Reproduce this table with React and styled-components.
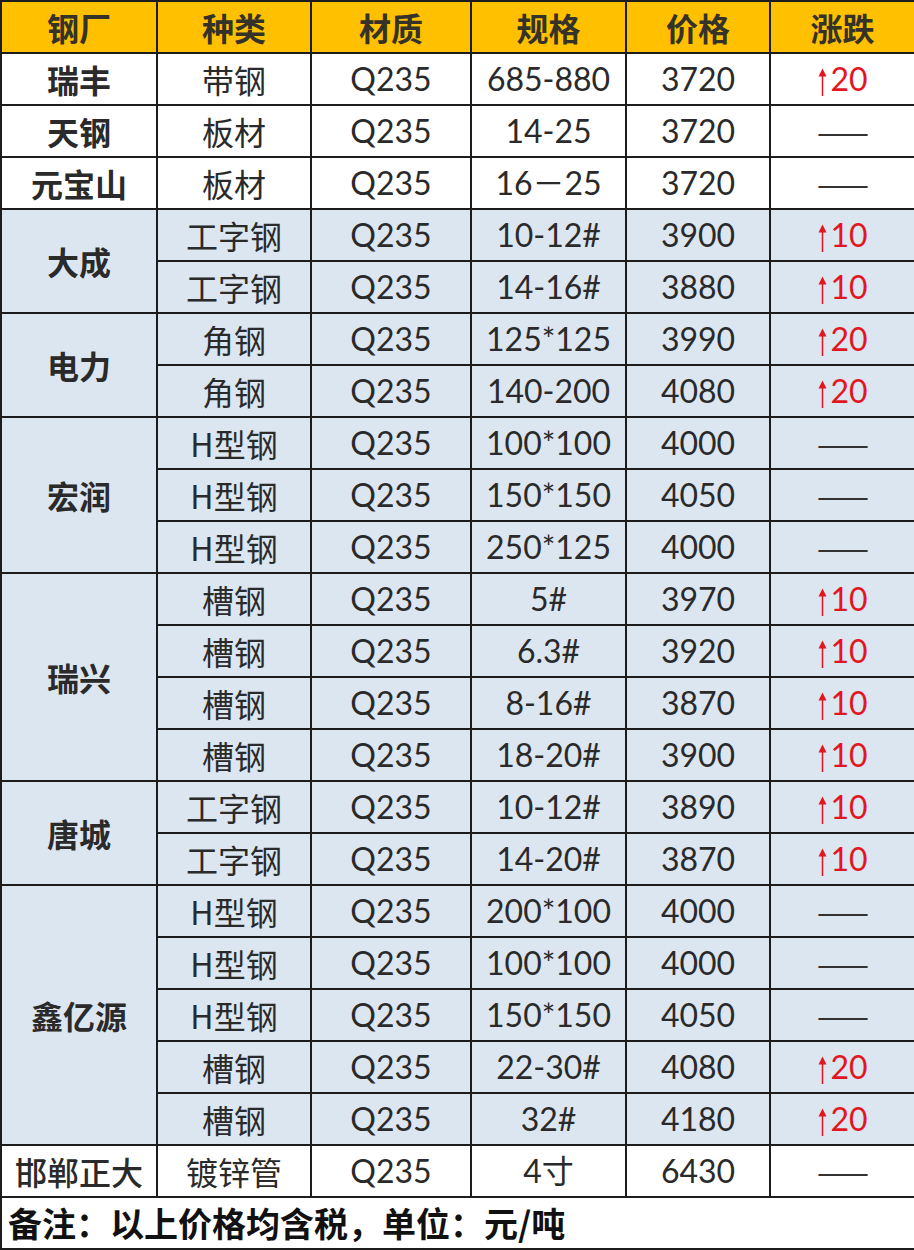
import React from "react";
import styled, { createGlobalStyle } from "styled-components";

const Global = createGlobalStyle`
  html, body { margin: 0; padding: 0; background: #fff; }
  body { font-family: Lato, "Noto Sans CJK SC", sans-serif; }
`;

const Table = styled.table`
  width: 914px;
  table-layout: fixed;
  border-collapse: collapse;
  color: #2a2a2a;
`;

const Row = styled.tr`
  height: 52px;
  background: ${(p) => (p.$blue ? "#dce6f1" : "#ffffff")};
`;

const HeadRow = styled.tr`
  height: 52px;
  background: #ffc000;
`;

const HeadCell = styled.th`
  border: 2px solid #1c1c1c;
  padding: 0;
  text-align: center;
  vertical-align: middle;
  font-family: "Noto Sans CJK SC", sans-serif;
  font-weight: 700;
  font-size: 32px;
  color: #35322a;
  line-height: 1;
`;

const Cell = styled.td`
  border: 2px solid #1c1c1c;
  padding: 0;
  text-align: center;
  vertical-align: middle;
  line-height: 1;
  white-space: nowrap;
  font-family: ${(p) =>
    p.$cjk ? `"Noto Sans CJK SC", sans-serif` : `Lato, "Noto Sans CJK SC", sans-serif`};
  font-size: ${(p) => (p.$cjk ? "32px" : "32px")};
  font-weight: ${(p) => p.$weight || 400};
`;

const ChangeCell = styled(Cell)`
  color: #e3161f;
`;

const Up = styled.span`
  font-family: Lato, sans-serif;
  font-size: 32px;
  font-weight: 400;
`;

const ArrowSvg = styled.svg`
  display: inline-block;
  width: 11px;
  height: 29px;
  vertical-align: -5px;
  margin-right: 2px;
`;

const Dash = styled.span`
  font-family: "Noto Sans CJK SC", sans-serif;
  font-size: 31px;
  color: #333;
  letter-spacing: -1px;
`;

const FootCell = styled.td`
  border: 2px solid #1c1c1c;
  padding: 0 0 0 6px;
  text-align: left;
  vertical-align: middle;
  font-family: "Noto Sans CJK SC", sans-serif;
  font-weight: 700;
  font-size: 34px;
  color: #111;
  line-height: 1;
`;

const Arrow = () => (
  <ArrowSvg viewBox="0 0 11 29">
    <path d="M5.5 5 L5.5 29" stroke="#e3161f" strokeWidth="1.5" fill="none" />
    <path d="M1.5 9.5 L5.5 1.5 L9.5 9.5 Z" fill="#e3161f" />
  </ArrowSvg>
);

const Change = ({ v }) =>
  v ? (
    <Up>
      <Arrow />
      {v}
    </Up>
  ) : (
    <Dash>——</Dash>
  );

const groups = [
  { name: "瑞丰", blue: false, rows: [["带钢", "685-880", "3720", "20"]] },
  { name: "天钢", blue: false, rows: [["板材", "14-25", "3720", null]] },
  { name: "元宝山", blue: false, rows: [["板材", "16－25", "3720", null]] },
  {
    name: "大成",
    blue: true,
    rows: [
      ["工字钢", "10-12#", "3900", "10"],
      ["工字钢", "14-16#", "3880", "10"],
    ],
  },
  {
    name: "电力",
    blue: true,
    rows: [
      ["角钢", "125*125", "3990", "20"],
      ["角钢", "140-200", "4080", "20"],
    ],
  },
  {
    name: "宏润",
    blue: true,
    rows: [
      ["H型钢", "100*100", "4000", null],
      ["H型钢", "150*150", "4050", null],
      ["H型钢", "250*125", "4000", null],
    ],
  },
  {
    name: "瑞兴",
    blue: true,
    rows: [
      ["槽钢", "5#", "3970", "10"],
      ["槽钢", "6.3#", "3920", "10"],
      ["槽钢", "8-16#", "3870", "10"],
      ["槽钢", "18-20#", "3900", "10"],
    ],
  },
  {
    name: "唐城",
    blue: true,
    rows: [
      ["工字钢", "10-12#", "3890", "10"],
      ["工字钢", "14-20#", "3870", "10"],
    ],
  },
  {
    name: "鑫亿源",
    blue: true,
    rows: [
      ["H型钢", "200*100", "4000", null],
      ["H型钢", "100*100", "4000", null],
      ["H型钢", "150*150", "4050", null],
      ["槽钢", "22-30#", "4080", "20"],
      ["槽钢", "32#", "4180", "20"],
    ],
  },
  { name: "邯郸正大", blue: false, weight: 500, rows: [["镀锌管", "4寸", "6430", null]] },
];

const headers = ["钢厂", "种类", "材质", "规格", "价格", "涨跌"];
const widths = [156, 154, 160, 155, 144, 145];

export default function App() {
  return (
    <>
      <Global />
      <Table>
        <colgroup>
          {widths.map((w, i) => (
            <col key={i} style={{ width: w }} />
          ))}
        </colgroup>
        <thead>
          <HeadRow>
            {headers.map((h) => (
              <HeadCell key={h}>{h}</HeadCell>
            ))}
          </HeadRow>
        </thead>
        <tbody>
          {groups.map((g) =>
            g.rows.map((r, i) => (
              <Row key={g.name + i} $blue={g.blue}>
                {i === 0 && (
                  <Cell $cjk rowSpan={g.rows.length} $weight={g.weight || 700}>
                    {g.name}
                  </Cell>
                )}
                <Cell $cjk>{r[0]}</Cell>
                <Cell>Q235</Cell>
                <Cell>{r[1]}</Cell>
                <Cell>{r[2]}</Cell>
                <ChangeCell>
                  <Change v={r[3]} />
                </ChangeCell>
              </Row>
            ))
          )}
          <Row>
            <FootCell colSpan={6}>备注：以上价格均含税，单位：元/吨</FootCell>
          </Row>
        </tbody>
      </Table>
    </>
  );
}
